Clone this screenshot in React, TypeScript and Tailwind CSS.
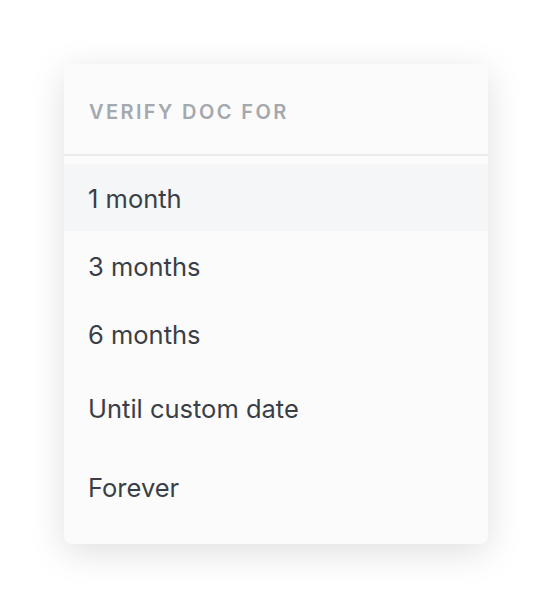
import React from "react";

const items = [
  { label: "1 month", h: "h-[67px]", active: true },
  { label: "3 months", h: "h-[70px]", active: false },
  { label: "6 months", h: "h-[66px]", active: false },
  { label: "Until custom date", h: "h-[82px]", active: false },
  { label: "Forever", h: "h-[76px]", active: false },
];

export default function App() {
  return (
    <div
      className="w-[552px] h-[608px] bg-white pt-[64px] pl-[64px]"
      style={{ fontFamily: "Inter, 'Noto Sans', sans-serif" }}
    >
      <div className="w-[424px] h-[480px] rounded-[8px] bg-[#fbfbfb] shadow-[0_8px_36px_rgba(0,0,0,0.13)] overflow-hidden flex flex-col">
        <div className="h-[92px] flex items-center pl-[25px] pt-[6px] border-b-2 border-[#ececed]">
          <span className="text-[20px] font-semibold tracking-[0.12em] text-[#a4a8af] leading-none">
            VERIFY DOC FOR
          </span>
        </div>
        <div className="pt-[8px] flex flex-col">
          {items.map((it) => (
            <div
              key={it.label}
              className={`${it.h} flex items-center pl-[24px] pt-[2px] ${it.active ? "bg-[#f5f6f8]" : ""}`}
            >
              <span className="text-[25.5px] text-[#3a3f47] leading-none">{it.label}</span>
            </div>
          ))}
        </div>
      </div>
    </div>
  );
}
